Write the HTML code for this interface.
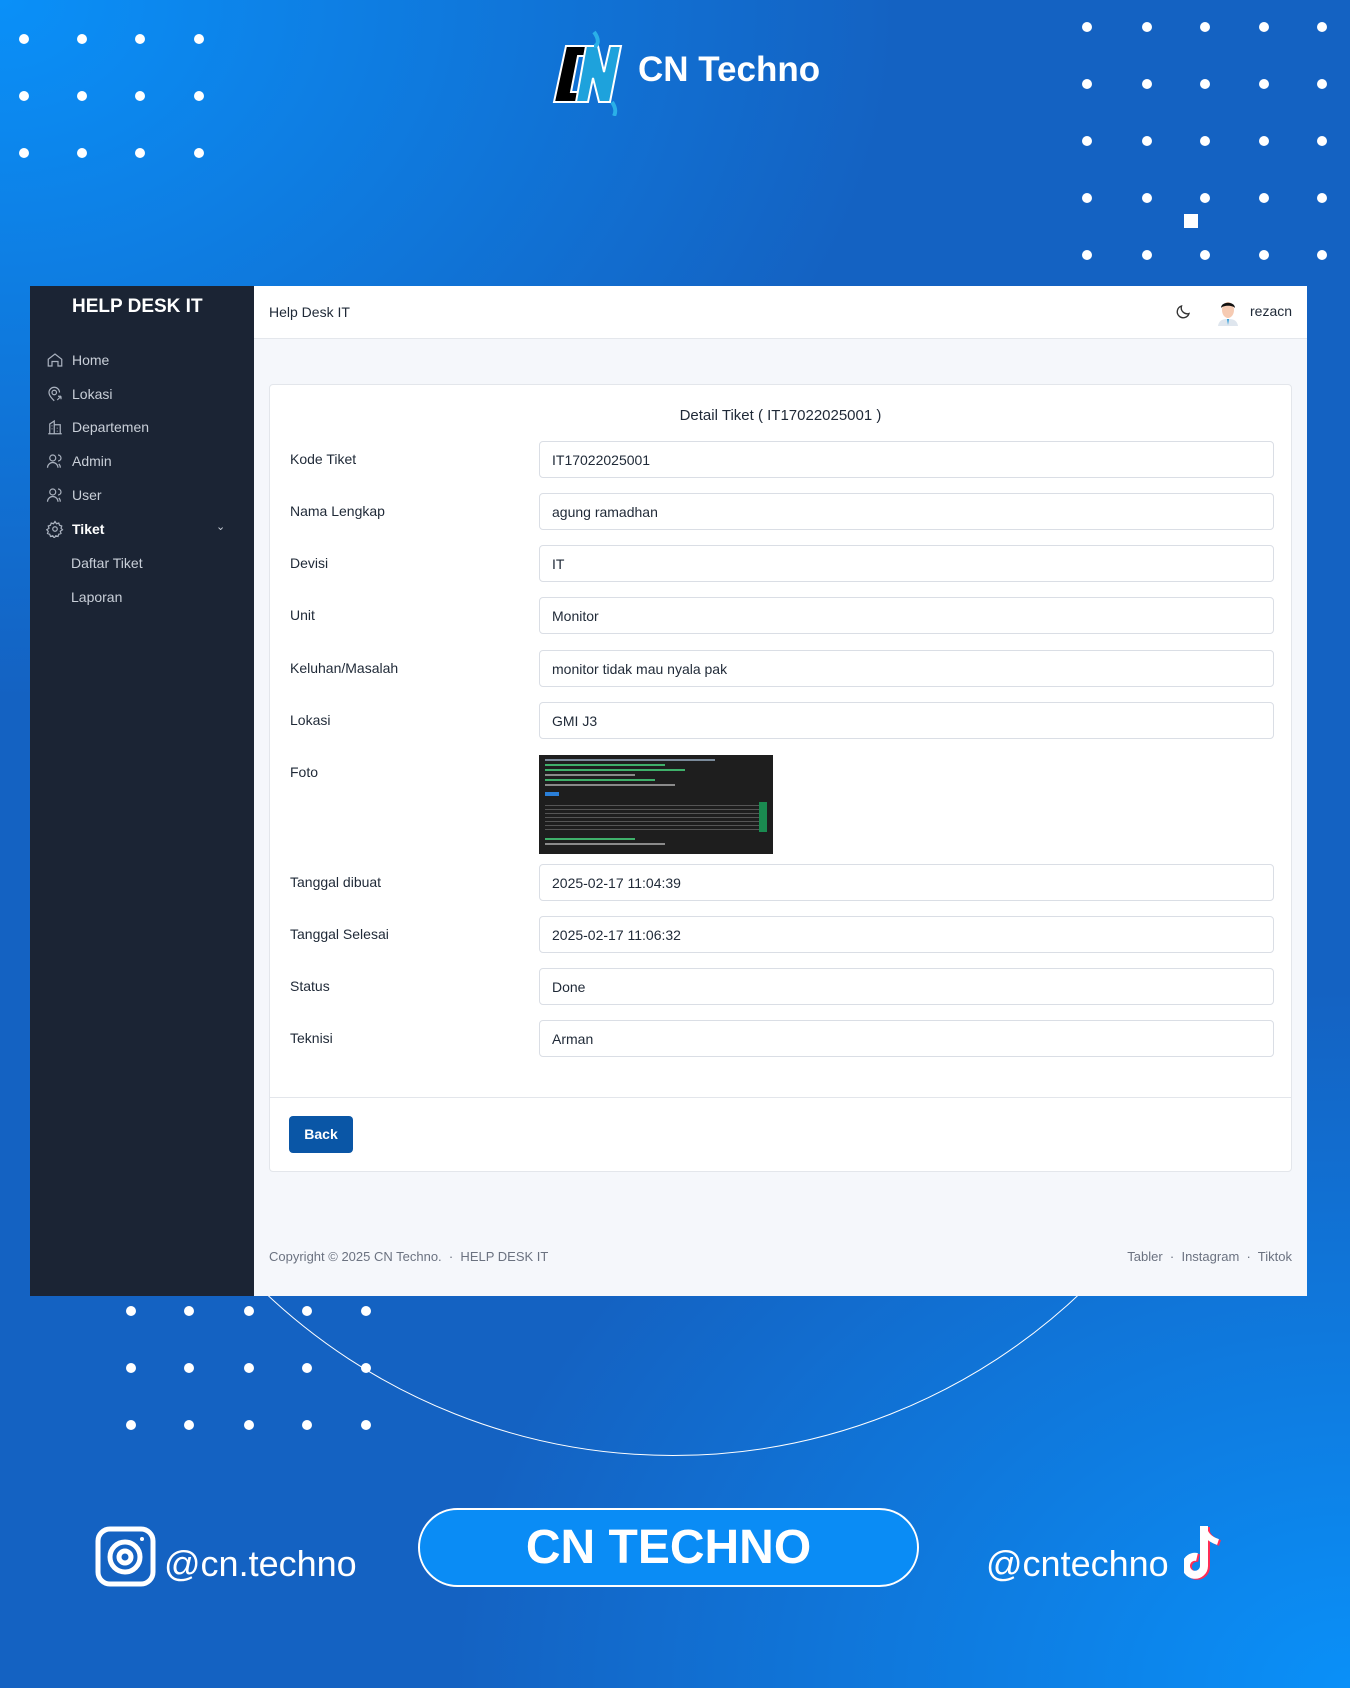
<!DOCTYPE html>
<html><head><meta charset="utf-8"><style>
*{margin:0;padding:0;box-sizing:border-box}
body{width:1350px;height:1688px;position:relative;overflow:hidden;font-family:"Liberation Sans",sans-serif;
background:radial-gradient(ellipse 900px 700px at 0 0,#0a90f8 0,rgba(10,144,248,0) 100%),radial-gradient(ellipse 900px 700px at 100% 100%,#0a90f8 0,rgba(10,144,248,0) 100%),#1462c2;}
.dot{position:absolute;width:10px;height:10px;border-radius:50%;background:#fff}
.abs{position:absolute}
.panel{position:absolute;left:30px;top:286px;width:1277px;height:1010px;background:#f5f7fb;}
.side{position:absolute;left:0;top:0;width:224px;height:1010px;background:#1b2434;color:#d7dce4}
.side .t{position:absolute;left:42px;top:10px;font-weight:bold;font-size:19px;color:#fff}
.mi{position:absolute;left:16px;font-size:14px;color:#c9cfd8;display:flex;align-items:center;gap:8px;height:20px}
.mi svg{width:18px;height:18px}
.hdr{position:absolute;left:224px;top:0;right:0;height:53px;background:#fff;border-bottom:1px solid #e4e7ec}
.card{position:absolute;left:239px;top:98px;width:1023px;height:788px;background:#fff;border:1px solid #e3e6eb;border-radius:4px}
.row{position:absolute;left:0;width:100%;height:37px}
.row .l{position:absolute;left:20px;top:10px;font-size:14px;color:#1f2937}
.row .i{position:absolute;left:269px;width:735px;height:37px;top:0;border:1px solid #dadee5;border-radius:4px;font-size:14px;color:#1f2937;padding:10px 12px}
</style></head><body>
<!-- dots -->
<div class="dot" style="left:19px;top:34px"></div><div class="dot" style="left:77px;top:34px"></div><div class="dot" style="left:135px;top:34px"></div><div class="dot" style="left:194px;top:34px"></div>
<div class="dot" style="left:19px;top:91px"></div><div class="dot" style="left:77px;top:91px"></div><div class="dot" style="left:135px;top:91px"></div><div class="dot" style="left:194px;top:91px"></div>
<div class="dot" style="left:19px;top:148px"></div><div class="dot" style="left:77px;top:148px"></div><div class="dot" style="left:135px;top:148px"></div><div class="dot" style="left:194px;top:148px"></div>
<div class="dot" style="left:1082px;top:22px"></div><div class="dot" style="left:1142px;top:22px"></div><div class="dot" style="left:1200px;top:22px"></div><div class="dot" style="left:1259px;top:22px"></div><div class="dot" style="left:1317px;top:22px"></div>
<div class="dot" style="left:1082px;top:79px"></div><div class="dot" style="left:1142px;top:79px"></div><div class="dot" style="left:1200px;top:79px"></div><div class="dot" style="left:1259px;top:79px"></div><div class="dot" style="left:1317px;top:79px"></div>
<div class="dot" style="left:1082px;top:136px"></div><div class="dot" style="left:1142px;top:136px"></div><div class="dot" style="left:1200px;top:136px"></div><div class="dot" style="left:1259px;top:136px"></div><div class="dot" style="left:1317px;top:136px"></div>
<div class="dot" style="left:1082px;top:193px"></div><div class="dot" style="left:1142px;top:193px"></div><div class="dot" style="left:1200px;top:193px"></div><div class="dot" style="left:1259px;top:193px"></div><div class="dot" style="left:1317px;top:193px"></div>
<div class="dot" style="left:1082px;top:250px"></div><div class="dot" style="left:1142px;top:250px"></div><div class="dot" style="left:1200px;top:250px"></div><div class="dot" style="left:1259px;top:250px"></div><div class="dot" style="left:1317px;top:250px"></div>
<div class="abs" style="left:1184px;top:214px;width:14px;height:14px;background:#fff"></div>
<div class="dot" style="left:126px;top:1306px"></div><div class="dot" style="left:184px;top:1306px"></div><div class="dot" style="left:244px;top:1306px"></div><div class="dot" style="left:302px;top:1306px"></div><div class="dot" style="left:361px;top:1306px"></div>
<div class="dot" style="left:126px;top:1363px"></div><div class="dot" style="left:184px;top:1363px"></div><div class="dot" style="left:244px;top:1363px"></div><div class="dot" style="left:302px;top:1363px"></div><div class="dot" style="left:361px;top:1363px"></div>
<div class="dot" style="left:126px;top:1420px"></div><div class="dot" style="left:184px;top:1420px"></div><div class="dot" style="left:244px;top:1420px"></div><div class="dot" style="left:302px;top:1420px"></div><div class="dot" style="left:361px;top:1420px"></div>
<!-- circle (lower arc only) -->
<div class="abs" style="left:0;top:1290px;width:1350px;height:200px;overflow:hidden">
<div class="abs" style="left:80px;top:-1020px;width:1186px;height:1186px;border:1.5px solid #fff;border-radius:50%"></div>
</div>
<!-- logo -->
<svg class="abs" style="left:552px;top:30px" width="86" height="86" viewBox="0 0 86 86">
<path d="M14 16h28l-4 10h-12l-7 36h12l-2 10H2z" fill="#000" stroke="#fff" stroke-width="2"/>
<path d="M34 16h12l6 26 6-26h11l-11 56H47l-6-24-5 24H24z" fill="#1ea2dc" stroke="#fff" stroke-width="2"/>
<path d="M42 2c6 8 4 14 0 14M60 72c4 6 4 10 2 14" stroke="#2ab0e8" stroke-width="4" fill="none"/>
</svg>
<div class="abs" style="left:638px;top:50px;font-size:35px;font-weight:bold;color:#fff">CN Techno</div>
<!-- panel -->
<div class="panel">
 <div class="side">
  <div class="t">HELP DESK IT</div>
  <div class="mi" style="top:64px"><svg viewBox="0 0 24 24" fill="none" stroke="#aab2bf" stroke-width="1.6"><path d="M3 11l9-7 9 7v9h-5v-6H8v6H3z"/></svg>Home</div>
  <div class="mi" style="top:98px"><svg viewBox="0 0 24 24" fill="none" stroke="#aab2bf" stroke-width="1.6"><circle cx="11" cy="10" r="3"/><path d="M11 21s-7-6-7-11a7 7 0 0114 0"/><path d="M15 20l5-5m0 0h-4m4 0v4"/></svg>Lokasi</div>
  <div class="mi" style="top:131px"><svg viewBox="0 0 24 24" fill="none" stroke="#aab2bf" stroke-width="1.6"><path d="M3 21h18M5 21V8l6-4v17M11 9h8v12M8 10v1M8 14v1M15 13v1M15 17v1"/></svg>Departemen</div>
  <div class="mi" style="top:165px"><svg viewBox="0 0 24 24" fill="none" stroke="#aab2bf" stroke-width="1.6"><circle cx="9" cy="8" r="4"/><path d="M2 21a7 7 0 0114 0M16 4a4 4 0 010 8M19 21a6 6 0 00-2-5"/></svg>Admin</div>
  <div class="mi" style="top:199px"><svg viewBox="0 0 24 24" fill="none" stroke="#aab2bf" stroke-width="1.6"><circle cx="9" cy="8" r="4"/><path d="M2 21a7 7 0 0114 0M16 4a4 4 0 010 8M19 21a6 6 0 00-2-5"/></svg>User</div>
  <div class="mi" style="top:233px;color:#fff;font-weight:bold"><svg viewBox="0 0 24 24" fill="none" stroke="#aab2bf" stroke-width="1.6"><circle cx="12" cy="12" r="3"/><path d="M12 2l2 3 3-1 1 3 3 1-1 3 2 2-3 2 1 3-3 1-1 3-3-1-2 3-2-3-3 1-1-3-3-1 1-3-2-2 3-2-1-3 3-1 1-3 3 1z"/></svg>Tiket</div>
  <div class="abs" style="left:186px;top:234px;font-size:11px;color:#c9cfd8">&#8964;</div>
  <div class="mi" style="top:267px;left:41px">Daftar Tiket</div>
  <div class="mi" style="top:301px;left:41px">Laporan</div>
 </div>
 <div class="hdr">
  <div class="abs" style="left:15px;top:18px;font-size:14px;color:#1f2937">Help Desk IT</div>
  <svg class="abs" style="left:920px;top:17px" width="18" height="18" viewBox="0 0 24 24" fill="none" stroke="#333" stroke-width="1.8"><path d="M20 14A8 8 0 0110 4a8 8 0 1010 10z"/></svg>
  <svg class="abs" style="left:961px;top:12px" width="26" height="28" viewBox="0 0 26 28"><path d="M3 28c1-6 5-7 10-7s9 1 10 7z" fill="#dfe6ee"/><path d="M12 21l1 6 1-6z" fill="#2a9bd8"/><ellipse cx="13" cy="12" rx="6" ry="8" fill="#f6cbb3"/><path d="M6 10c0-7 14-7 14 0-2-3-12-3-14 0z" fill="#111"/></svg>
  <div class="abs" style="left:996px;top:17px;font-size:14px;color:#1f2937">rezacn</div>
 </div>
 <div class="card">
  <div class="abs" style="left:0;width:100%;top:22px;text-align:center;font-size:15px;color:#1f2937">Detail Tiket ( IT17022025001 )</div>
  <div class="row" style="top:56px"><div class="l">Kode Tiket</div><div class="i">IT17022025001</div></div>
  <div class="row" style="top:108px"><div class="l">Nama Lengkap</div><div class="i">agung ramadhan</div></div>
  <div class="row" style="top:160px"><div class="l">Devisi</div><div class="i">IT</div></div>
  <div class="row" style="top:212px"><div class="l">Unit</div><div class="i">Monitor</div></div>
  <div class="row" style="top:265px"><div class="l">Keluhan/Masalah</div><div class="i">monitor tidak mau nyala pak</div></div>
  <div class="row" style="top:317px"><div class="l">Lokasi</div><div class="i">GMI J3</div></div>
  <div class="row" style="top:369px"><div class="l">Foto</div></div>
  <div class="abs" style="left:269px;top:370px;width:234px;height:99px;background:#1e1e1e;padding:4px 6px">
   <div style="height:2px;width:170px;background:#7a8a9a;margin-bottom:3px"></div>
   <div style="height:2px;width:120px;background:#3fb06a;margin-bottom:3px"></div>
   <div style="height:2px;width:140px;background:#3fb06a;margin-bottom:3px"></div>
   <div style="height:2px;width:90px;background:#8a8a8a;margin-bottom:3px"></div>
   <div style="height:2px;width:110px;background:#3fb06a;margin-bottom:3px"></div>
   <div style="height:2px;width:130px;background:#8a8a8a;margin-bottom:6px"></div>
   <div style="height:4px;width:14px;background:#2a7fd8;margin-bottom:6px"></div>
   <div style="height:30px;border-right:8px solid #1a8a50;margin-bottom:6px;background:repeating-linear-gradient(#1e1e1e 0 3px,#555 3px 4px)"></div>
   <div style="height:2px;width:90px;background:#3fb06a;margin-bottom:3px"></div>
   <div style="height:2px;width:120px;background:#8a8a8a"></div>
  </div>
  <div class="row" style="top:479px"><div class="l">Tanggal dibuat</div><div class="i">2025-02-17 11:04:39</div></div>
  <div class="row" style="top:531px"><div class="l">Tanggal Selesai</div><div class="i">2025-02-17 11:06:32</div></div>
  <div class="row" style="top:583px"><div class="l">Status</div><div class="i">Done</div></div>
  <div class="row" style="top:635px"><div class="l">Teknisi</div><div class="i">Arman</div></div>
  <div class="abs" style="left:0;right:0;top:712px;border-top:1px solid #e3e6eb"></div>
  <div class="abs" style="left:19px;top:731px;width:64px;height:37px;background:#0a56a6;border-radius:4px;color:#fff;font-size:14px;font-weight:bold;text-align:center;line-height:37px">Back</div>
 </div>
 <div class="abs" style="left:239px;top:963px;font-size:13px;color:#6b7280">Copyright © 2025 CN Techno. &nbsp;·&nbsp; HELP DESK IT</div>
 <div class="abs" style="right:15px;top:963px;font-size:13px;color:#6b7280">Tabler &nbsp;·&nbsp; Instagram &nbsp;·&nbsp; Tiktok</div>
</div>
<!-- bottom -->
<svg class="abs" style="left:95px;top:1526px" width="61" height="61" viewBox="0 0 61 61" fill="none" stroke="#fff" stroke-width="5"><rect x="3" y="3" width="55" height="55" rx="12"/><circle cx="30" cy="31" r="15"/><circle cx="30" cy="31" r="6"/><circle cx="47" cy="13" r="2" fill="#fff" stroke="none"/></svg>
<div class="abs" style="left:164px;top:1543px;font-size:36px;color:#fff">@cn.techno</div>
<div class="abs" style="left:418px;top:1508px;width:501px;height:79px;border:2px solid #fff;border-radius:40px;background:#0a8cf5;color:#fff;font-weight:bold;font-size:48px;text-align:center;line-height:75px">CN TECHNO</div>
<div class="abs" style="left:986px;top:1543px;font-size:36px;color:#fff">@cntechno</div>
<svg class="abs" style="left:1184px;top:1524px" width="42" height="60" viewBox="0 0 42 60"><path d="M20 2v40a9 9 0 11-7-9" fill="none" stroke="#ff2d55" stroke-width="8" transform="translate(2,1)"/><path d="M20 2c0 10 8 14 14 16" fill="none" stroke="#ff2d55" stroke-width="6" transform="translate(2,1)"/><path d="M20 2v40a9 9 0 11-7-9" fill="none" stroke="#fff" stroke-width="8"/><path d="M20 2c0 10 8 14 14 16" fill="none" stroke="#fff" stroke-width="6"/></svg>
</body></html>
